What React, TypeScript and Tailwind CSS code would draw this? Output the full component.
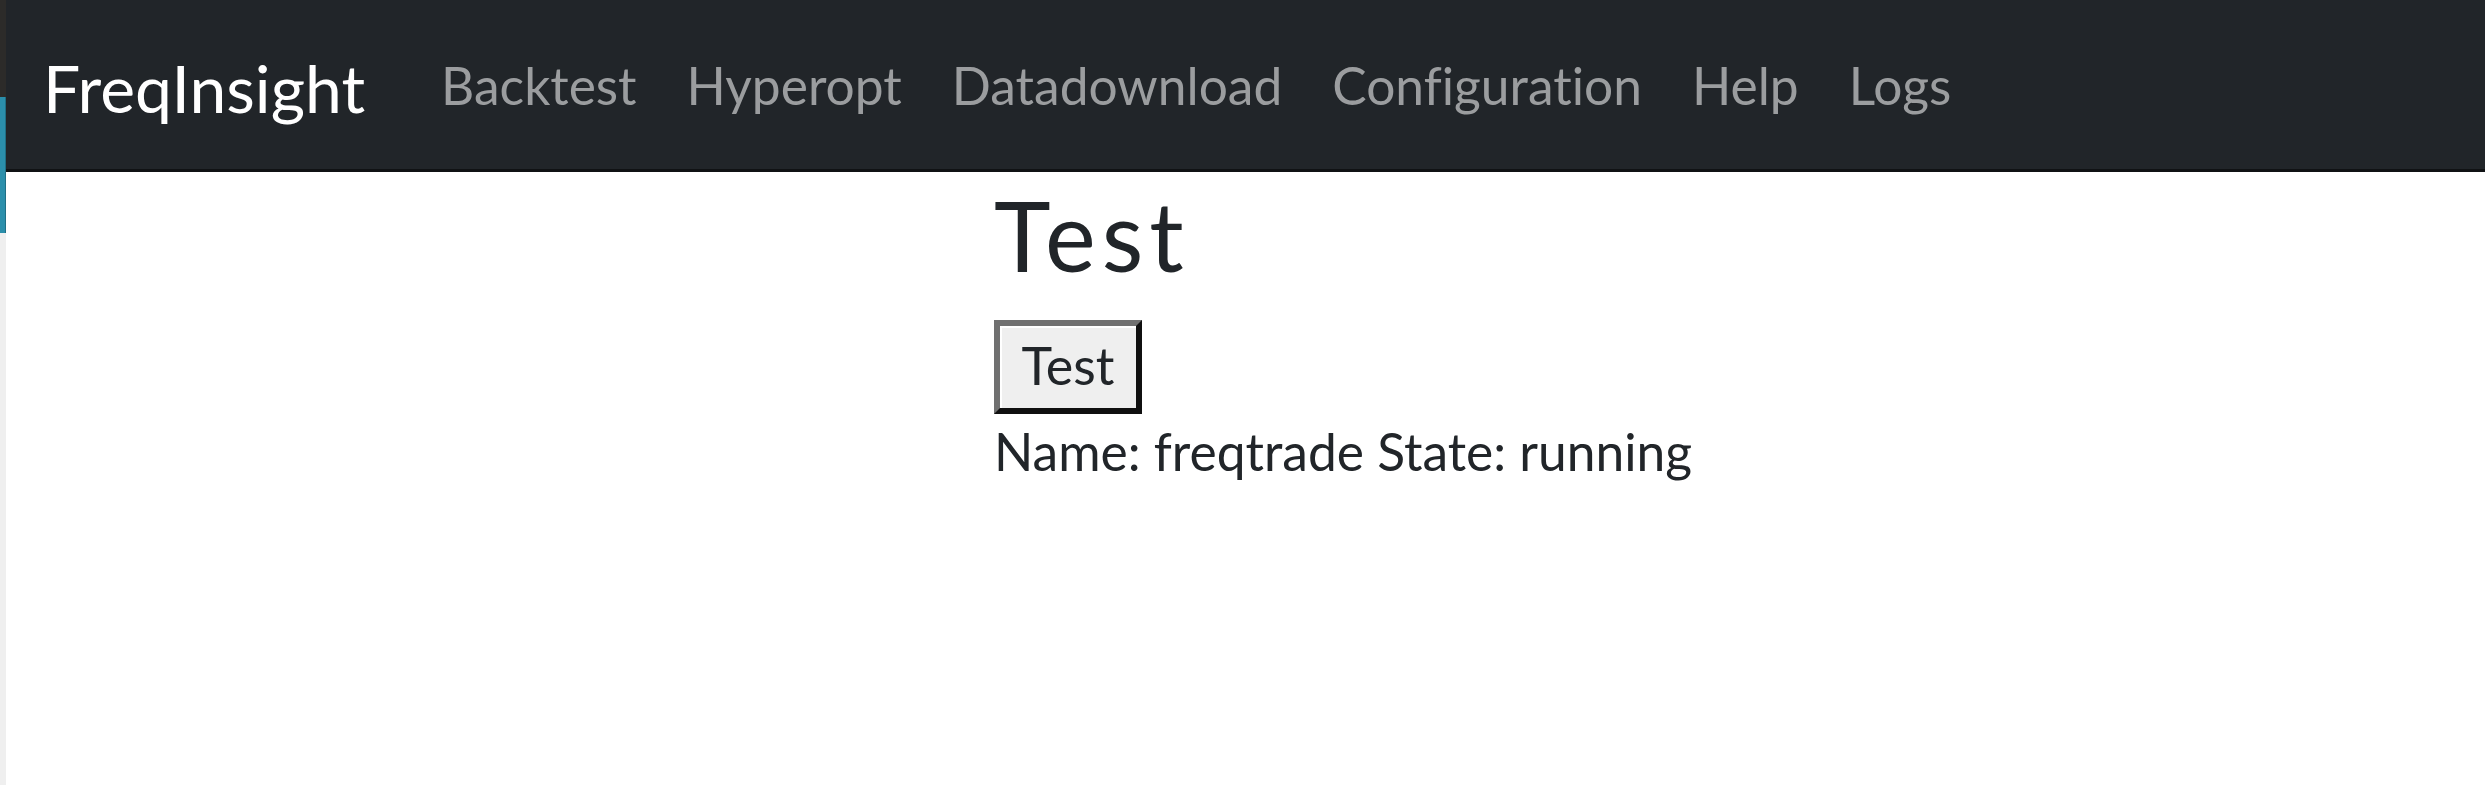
const links = ["Backtest", "Hyperopt", "Datadownload", "Configuration", "Help", "Logs"];

// ── Navbar ───────────────────────────────────────────────────────────────────
function Navbar() {
  return (
    <nav className="flex h-[172px] items-center border-b-[3px] border-[#101214] bg-[#212529] pl-[37px]">
      <a href="#" className="mr-[51px] pt-[6px] text-[66px] leading-[78px] text-white">
        FreqInsight
      </a>
      <ul className="flex items-center">
        {links.map((label) => (
          <li key={label}>
            <a
              href="#"
              className="block px-[25px] text-[51.5px] leading-[62px] text-[#9b9d9f] [font-variant-ligatures:none]"
            >
              {label}
            </a>
          </li>
        ))}
      </ul>
    </nav>
  );
}

// ── Side strip (edge of the window behind) ───────────────────────────────────
function EdgeStrip() {
  return (
    <div className="flex w-[6px] shrink-0 flex-col">
      <div className="h-[97px] bg-[#2c2b29]" />
      <div className="h-[136px] border-r border-[#1f6f85] bg-[#2b8fab]" />
      <div className="flex-1 bg-[#efefef]" />
    </div>
  );
}

export default function App() {
  return (
    <div
      className="flex h-[785px] w-full bg-white text-[#212529] [font-variant-ligatures:none]"
      style={{ fontFamily: "Lato, 'Noto Sans', sans-serif" }}
    >
      <EdgeStrip />
      <div className="flex flex-1 flex-col">
        <Navbar />
        <main className="flex flex-col items-start pl-[988px] pt-[5px]">
          <h1 className="mb-[28px] text-[96px] font-normal leading-[115px] tracking-[6px]">Test</h1>
          <button
            type="button"
            className="w-[148px] border-[6px] border-t-[#707070] border-l-[#707070] border-r-[#101010] border-b-[#101010] bg-[#efefef] pt-[8px] pb-[12px] text-center text-[52px] leading-[62px] shadow-[inset_2px_2px_0_#ffffff]"
          >
            Test
          </button>
          <p className="mt-[6px] text-[51.5px] leading-[62px]">Name: freqtrade State: running</p>
        </main>
      </div>
    </div>
  );
}
